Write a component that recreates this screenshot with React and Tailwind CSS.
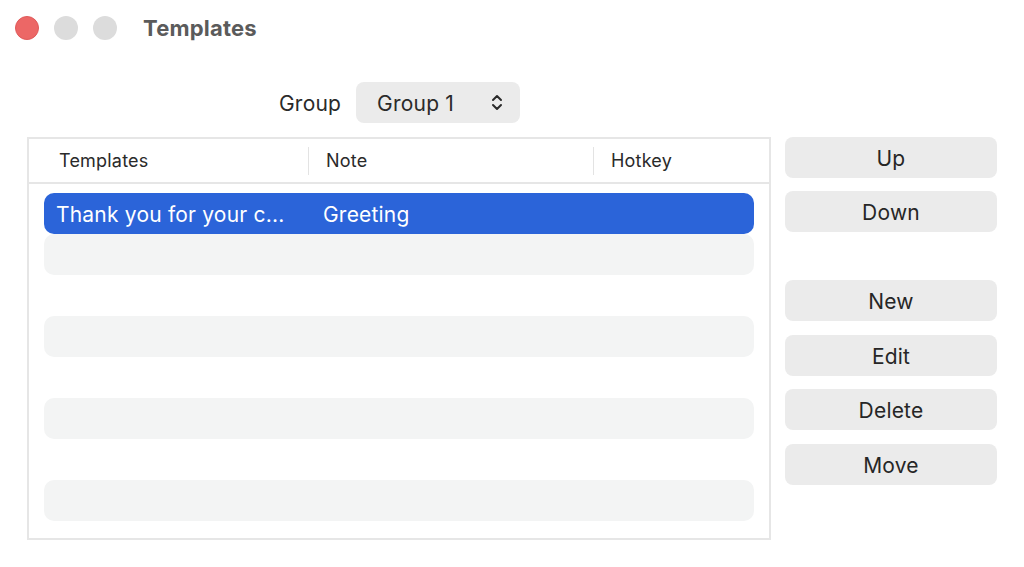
import React from "react";

const font = { fontFamily: "Inter, 'Noto Sans', 'Liberation Sans', sans-serif" };

function Chevrons() {
  return (
    <svg width="12" height="17" viewBox="0 0 12 17" fill="none" stroke="#2a2a2a" strokeWidth="2" strokeLinecap="round" strokeLinejoin="round">
      <path d="M2 6 L6 2 L10 6" />
      <path d="M2 11 L6 15 L10 11" />
    </svg>
  );
}

function SideButton({ label, className = "" }) {
  return (
    <button className={`h-[41px] w-[212px] pt-[2px] rounded-[8px] bg-[#ebebeb] text-[21px] tracking-[0.2px] text-[#262626] flex items-center justify-center ${className}`}>
      {label}
    </button>
  );
}

export default function App() {
  const rows = [0, 1, 2, 3, 4, 5, 6, 7];
  return (
    <div className="w-[1024px] h-[567px] bg-white overflow-hidden" style={font}>
      {/* title bar */}
      <div className="h-[56px] flex items-center pl-[15px]">
        <div className="flex gap-[15px]">
          <span className="w-[24px] h-[24px] rounded-full bg-[#ec6766] border border-[#e05a5a]" />
          <span className="w-[24px] h-[24px] rounded-full bg-[#dcdcdc]" />
          <span className="w-[24px] h-[24px] rounded-full bg-[#dcdcdc]" />
        </div>
        <span className="ml-[26px] text-[22px] font-bold text-[#5b5b5b] tracking-[0.2px]">Templates</span>
      </div>

      {/* group picker */}
      <div className="mt-[26px] flex items-center pl-[279px] gap-[15px]">
        <span className="pt-[2px] text-[21px] tracking-[0.2px] text-[#2a2a2a]">Group</span>
        <div className="h-[41px] w-[164px] rounded-[8px] bg-[#ebebeb] flex items-center pl-[21px] pr-[17px] justify-between">
          <span className="pt-[2px] text-[21px] tracking-[0.2px] text-[#2a2a2a]">Group 1</span>
          <Chevrons />
        </div>
      </div>

      {/* table + side buttons */}
      <div className="mt-[14px] flex pl-[27px] gap-[14px]">
        <div className="w-[744px] h-[403px] border-2 border-[#e6e6e6] bg-white flex flex-col">
          <div className="h-[45px] border-b-2 border-[#e6e6e6] flex items-center text-[18px] tracking-[0.2px] text-[#2a2a2a]">
            <div className="w-[279px] pl-[30px]">Templates</div>
            <div className="w-[1px] h-[28px] bg-[#e3e3e3]" />
            <div className="w-[284px] pl-[17px]">Note</div>
            <div className="w-[1px] h-[28px] bg-[#e3e3e3]" />
            <div className="pl-[17px]">Hotkey</div>
          </div>
          <div className="pt-[9px] pl-[15px] pr-[15px] flex flex-col">
            {rows.map((i) =>
              i === 0 ? (
                <div key={i} className="h-[41px] pt-[2px] rounded-[10px] bg-[#2b64d9] flex items-center text-white text-[21px] tracking-[0.2px]">
                  <div className="w-[279px] pl-[12px] whitespace-nowrap overflow-hidden">Thank you for your c...</div>
                  <div>Greeting</div>
                </div>
              ) : (
                <div key={i} className={`h-[41px] rounded-[10px] ${i % 2 === 1 ? "bg-[#f3f4f4]" : "bg-white"}`} />
              )
            )}
          </div>
        </div>

        <div className="flex flex-col">
          <SideButton label="Up" />
          <SideButton label="Down" className="mt-[13px]" />
          <SideButton label="New" className="mt-[48px]" />
          <SideButton label="Edit" className="mt-[14px]" />
          <SideButton label="Delete" className="mt-[13px]" />
          <SideButton label="Move" className="mt-[14px]" />
        </div>
      </div>
    </div>
  );
}
